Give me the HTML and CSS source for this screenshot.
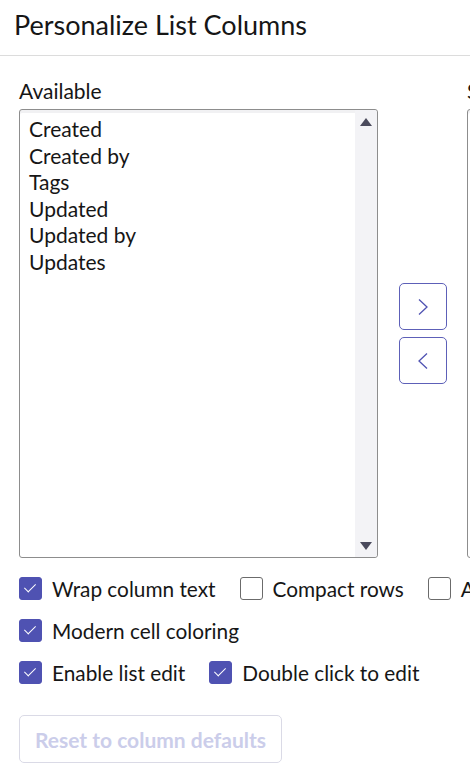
FILE: index.html
```html
<!DOCTYPE html>
<html>

<head>
    <title>Personalize List Columns</title>
    <link rel="stylesheet" href="styles.css">
</head>

<body>
    <div class="header">
        <h1>Personalize List Columns</h1>
    </div>

    <div class="columns">
        <div class="col-label">Available</div>
        <div></div>
        <div class="col-label">Selected</div>

        <div class="listbox">
            <ul class="options">
                <li>Created</li>
                <li>Created by</li>
                <li>Tags</li>
                <li>Updated</li>
                <li>Updated by</li>
                <li>Updates</li>
            </ul>
            <div class="scrollbar">
                <span class="arrow up"></span>
                <span class="arrow down"></span>
            </div>
        </div>

        <div class="move-buttons">
            <button class="move-btn" title="Add">
                <svg width="14" height="20" viewBox="0 0 14 20"><path d="M3 2.5 L11 10 L3 17.5" fill="none" stroke="#4f52b2" stroke-width="1.3"/></svg>
            </button>
            <button class="move-btn" title="Remove">
                <svg width="14" height="20" viewBox="0 0 14 20"><path d="M11 2.5 L3 10 L11 17.5" fill="none" stroke="#4f52b2" stroke-width="1.3"/></svg>
            </button>
        </div>

        <div class="listbox"></div>
    </div>

    <div class="options-panel">
        <div class="check-row">
            <label class="check"><span class="box checked"></span>Wrap column text</label>
            <label class="check"><span class="box"></span>Compact rows</label>
            <label class="check"><span class="box"></span>Active row highlighting</label>
        </div>
        <div class="check-row">
            <label class="check"><span class="box checked"></span>Modern cell coloring</label>
        </div>
        <div class="check-row">
            <label class="check"><span class="box checked"></span>Enable list edit</label>
            <label class="check"><span class="box checked"></span>Double click to edit</label>
        </div>

        <button class="reset-btn" disabled>Reset to column defaults</button>
    </div>
</body>

</html>
```

FILE: styles.css
```css
html,
body {
    overflow: hidden;
}

body {
    font-family: Lato, "Noto Sans", sans-serif;
    margin: 0;
    padding: 0;
    color: #161616;
    background-color: #fff;
    width: 470px;
}

.header {
    height: 55px;
    border-bottom: 1px solid #dcdcdc;
    padding: 0 14px;
    display: flex;
    align-items: center;
}

h1 {
    margin: 0 0 6px 0;
    font-size: 27px;
    font-weight: 400;
    white-space: nowrap;
}

/* Column pickers */
.columns {
    display: grid;
    grid-template-columns: 359px 89px 359px;
    grid-template-rows: 53px 449px;
    padding: 0 19px;
    width: max-content;
}

.col-label {
    font-size: 21px;
    align-self: end;
    padding-bottom: 6px;
}

.listbox {
    position: relative;
    border: 1px solid #8d8d8d;
    border-radius: 3px;
    background-color: #fff;
    box-sizing: border-box;
    box-shadow: inset 0 3px 0 #f1f1f3;
}

.options {
    list-style: none;
    margin: 0;
    padding: 6px 0 0 9px;
    font-size: 21px;
    line-height: 26.5px;
}

.scrollbar {
    position: absolute;
    top: 0;
    right: 0;
    bottom: 0;
    width: 22px;
    background-color: #f3f3f6;
    border-radius: 0 3px 3px 0;
}

.arrow {
    position: absolute;
    left: 5px;
    width: 0;
    height: 0;
    border-left: 6px solid transparent;
    border-right: 6px solid transparent;
}

.arrow.up {
    top: 8px;
    border-bottom: 8px solid #4a4a5c;
}

.arrow.down {
    bottom: 7px;
    border-top: 8px solid #4a4a5c;
}

.move-buttons {
    display: flex;
    flex-direction: column;
    align-items: center;
    justify-content: center;
    gap: 7px;
}

.move-btn {
    width: 48px;
    height: 47px;
    padding: 0;
    border: 1px solid #5d60b8;
    border-radius: 5px;
    background-color: #fff;
    display: flex;
    align-items: center;
    justify-content: center;
    cursor: pointer;
}

/* Checkboxes */
.options-panel {
    padding: 19px 19px 0 19px;
}

.check-row {
    display: flex;
    gap: 24px;
    height: 42px;
    white-space: nowrap;
}

.check {
    display: flex;
    align-items: flex-start;
    gap: 10px;
    font-size: 20.8px;
    line-height: 24px;
}

.box {
    width: 23px;
    height: 23px;
    box-sizing: border-box;
    border: 1px solid #6b6b6b;
    border-radius: 3px;
    background-color: #fff;
    flex-shrink: 0;
    position: relative;
}

.box.checked {
    border-color: #4f52b2;
    background-color: #4f52b2;
}

.box.checked::after {
    content: "";
    position: absolute;
    left: 7px;
    top: 3px;
    width: 5px;
    height: 10px;
    border: solid #fff;
    border-width: 0 1.6px 1.6px 0;
    transform: rotate(45deg);
}

.reset-btn {
    margin-top: 12px;
    width: 263px;
    height: 48px;
    font-family: Lato, "Noto Sans", sans-serif;
    font-size: 21px;
    font-weight: 700;
    color: #cbcdea;
    background-color: #fff;
    border: 1px solid #dadae6;
    border-radius: 5px;
}
```
